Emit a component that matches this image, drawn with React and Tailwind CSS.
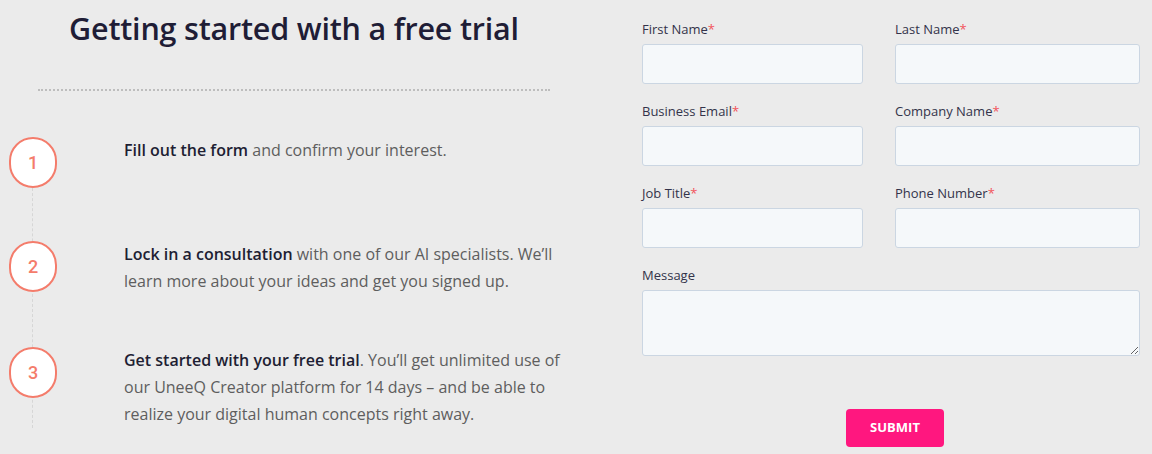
import React from "react";

const steps = [
  { n: "1", bold: "Fill out the form", rest: " and confirm your interest.", mb: "mb-[53px]" },
  { n: "2", bold: "Lock in a consultation", rest: " with one of our AI specialists. We’ll learn more about your ideas and get you signed up.", mb: "mb-[52px]" },
  { n: "3", bold: "Get started with your free trial", rest: ". You’ll get unlimited use of our UneeQ Creator platform for 14 days – and be able to realize your digital human concepts right away.", mb: "" },
];

function Field({ label, required = true }) {
  return (
    <div className="flex flex-col">
      <label className="text-[13px] leading-[18px] text-[#33334a] h-[18px]">
        {label}
        {required && <span className="text-[#f2545b]">*</span>}
      </label>
      <input className="mt-[6px] h-[40px] w-full rounded-[3px] border border-[#cbd6e2] bg-[#f5f8fa]" />
    </div>
  );
}

export default function App() {
  return (
    <div className="w-[1152px] h-[454px] bg-[#ebebeb] flex overflow-hidden" style={{ fontFamily: '"Open Sans", "Noto Sans", sans-serif' }}>
      <div className="w-[590px] shrink-0 flex flex-col">
        <div className="pl-[38px] w-[550px] pt-[8px]">
          <h1 className="text-center text-[30.5px] leading-[40px] font-semibold text-[#1f1d36] tracking-[-0.2px]">
            Getting started with a free trial
          </h1>
          <div className="mt-[41px] border-t-2 border-dotted border-[#bdbdbd]" />
        </div>
        <div className="relative mt-[46px]">
          <div className="absolute left-[32px] top-[51px] h-[240px] border-l border-dashed border-[#d6d6d6]" />
          {steps.map((s) => (
            <div key={s.n} className={`relative flex items-start ${s.mb}`}>
              <div className="w-[124px] shrink-0 pl-[9px]">
                <div className="w-[48px] h-[51px] rounded-full border-2 border-[#f47c6b] bg-white flex items-center justify-center text-[#f47c6b] text-[18px] font-medium" style={{ fontFamily: "Roboto, sans-serif" }}>
                  {s.n}
                </div>
              </div>
              <p className="w-[440px] text-[16px] leading-[27px] text-[#5e5e5e]">
                <span className="font-semibold text-[#1e1e33]">{s.bold}</span>
                {s.rest}
              </p>
            </div>
          ))}
        </div>
      </div>
      <div className="ml-[52px] pt-[20px] w-[498px] flex flex-col">
        <div className="grid grid-cols-[221px_245px] gap-x-[32px] gap-y-[18px]">
          <Field label="First Name" />
          <Field label="Last Name" />
          <Field label="Business Email" />
          <Field label="Company Name" />
          <Field label="Job Title" />
          <Field label="Phone Number" />
        </div>
        <div className="mt-[18px] flex flex-col">
          <label className="text-[13px] leading-[18px] h-[18px] text-[#33334a]">Message</label>
          <textarea className="mt-[6px] h-[66px] w-full rounded-[3px] border border-[#cbd6e2] bg-[#f5f8fa]" />
        </div>
        <div className="mt-[53px] flex justify-center pl-[8px]">
          <button className="w-[98px] h-[38px] rounded-[4px] bg-[#ff177f] text-white text-[13px] font-bold">
            SUBMIT
          </button>
        </div>
      </div>
    </div>
  );
}
